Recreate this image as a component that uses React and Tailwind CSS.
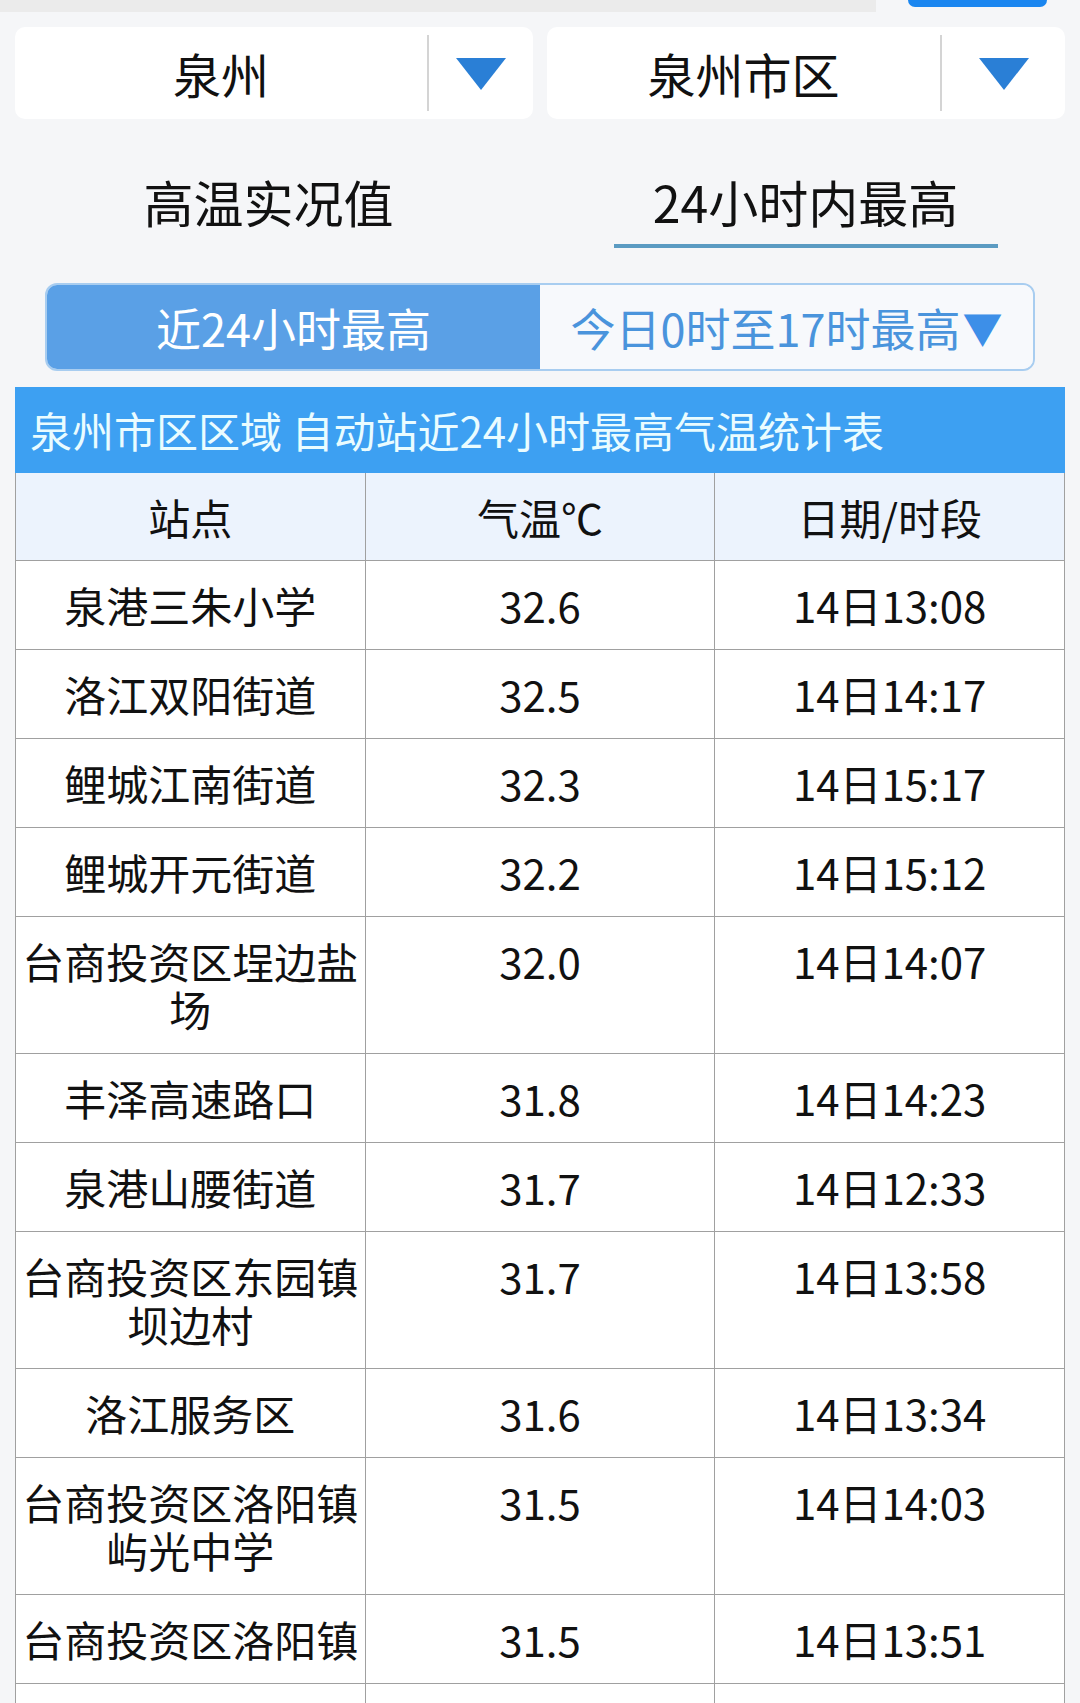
import React from "react";

const rows = [
  ["泉港三朱小学", "32.6", "14日13:08"],
  ["洛江双阳街道", "32.5", "14日14:17"],
  ["鲤城江南街道", "32.3", "14日15:17"],
  ["鲤城开元街道", "32.2", "14日15:12"],
  ["台商投资区埕边盐场", "32.0", "14日14:07"],
  ["丰泽高速路口", "31.8", "14日14:23"],
  ["泉港山腰街道", "31.7", "14日12:33"],
  ["台商投资区东园镇坝边村", "31.7", "14日13:58"],
  ["洛江服务区", "31.6", "14日13:34"],
  ["台商投资区洛阳镇屿光中学", "31.5", "14日14:03"],
  ["台商投资区洛阳镇", "31.5", "14日13:51"],
  ["\u00a0", "\u00a0", "\u00a0"],
];

function Tri({ color }) {
  return (
    <svg width="50" height="32" viewBox="0 0 50 32">
      <polygon points="0,0 50,0 25,32" fill={color} />
    </svg>
  );
}

function Dropdown({ label, right }) {
  return (
    <div className="flex-1 h-[92px] bg-white rounded-[10px] flex items-center">
      <div className="flex-1 text-center text-[48px] leading-none text-[#111]">{label}</div>
      <div className="w-[2px] h-[76px] bg-[#d4d4d4]" />
      <div className={(right ? "w-[123px]" : "w-[104px]") + " flex justify-center pt-[2px]"}>
        <Tri color="#2a7fd6" />
      </div>
    </div>
  );
}

export default function App() {
  return (
    <div
      className="w-[1080px] min-h-[1703px] bg-[#f5f6f8] overflow-hidden"
      style={{ fontFamily: '"Noto Sans CJK SC", "Noto Sans", sans-serif' }}
    >
      {/* top strip */}
      <div className="flex h-[12px]">
        <div className="w-[876px] h-[12px] bg-[#ebebeb]" />
        <div className="ml-[32px] w-[139px] h-[7px] bg-[#1a86f0] rounded-b-[12px]" />
      </div>

      {/* dropdowns */}
      <div className="flex gap-[14px] px-[15px] pt-[15px]">
        <Dropdown label="泉州" />
        <Dropdown label="泉州市区" right />
      </div>

      {/* tabs */}
      <div className="flex pt-[52px]">
        <div className="flex-1 flex flex-col items-center">
          <div className="text-[50px] leading-[60px] text-[#111]">高温实况值</div>
          <div className="mt-[13px] h-[4px] w-[384px]" />
        </div>
        <div className="flex-1 flex flex-col items-center pr-[6px]">
          <div className="text-[50px] leading-[60px] text-[#111]">24小时内最高</div>
          <div className="mt-[13px] h-[4px] w-[384px] bg-[#5b9bc2]" />
        </div>
      </div>

      {/* segment */}
      <div className="mx-[45px] mt-[35px] h-[88px] rounded-[12px] border-2 border-[#a8cdf0] overflow-hidden flex">
        <div className="flex-1 bg-[#5aa0e6] flex items-center justify-center text-white text-[45px] leading-none">
          近24小时最高
        </div>
        <div className="flex-1 bg-[#f7f9fc] flex items-center justify-center text-[#4a94dc] text-[45px] leading-none">
          今日0时至17时最高<span className="text-[#3d8fe8] text-[40px] ml-[2px]">▼</span>
        </div>
      </div>

      {/* table */}
      <div className="mx-[15px] mt-[16px]">
        <div className="h-[86px] bg-[#3da0f2] pl-[15px] flex items-center text-[42px] leading-none text-[#eafcff]">
          泉州市区区域 自动站近24小时最高气温统计表
        </div>
        <div className="grid grid-cols-3 bg-[#ecf3fd] border-l border-[#a0a0a0]">
          {["站点", "气温℃", "日期/时段"].map((h) => (
            <div
              key={h}
              className="h-[88px] flex items-center justify-center text-[42px] leading-none text-[#111] border-r border-b border-[#a0a0a0]"
            >
              {h}
            </div>
          ))}
        </div>
        <div className="grid grid-cols-3 bg-white border-l border-[#a0a0a0]">
          {rows.map(([name, t, d], i) => (
            <React.Fragment key={i}>
              <div className="px-[5px] py-[20px] text-center text-[42px] leading-[48px] text-[#111] border-r border-b border-[#a0a0a0] break-all">
                {name}
              </div>
              <div className="py-[20px] text-center text-[42px] leading-[48px] text-[#111] border-r border-b border-[#a0a0a0]">
                {t}
              </div>
              <div className="py-[20px] text-center text-[42px] leading-[48px] text-[#111] border-r border-b border-[#a0a0a0]">
                {d}
              </div>
            </React.Fragment>
          ))}
        </div>
      </div>
    </div>
  );
}
